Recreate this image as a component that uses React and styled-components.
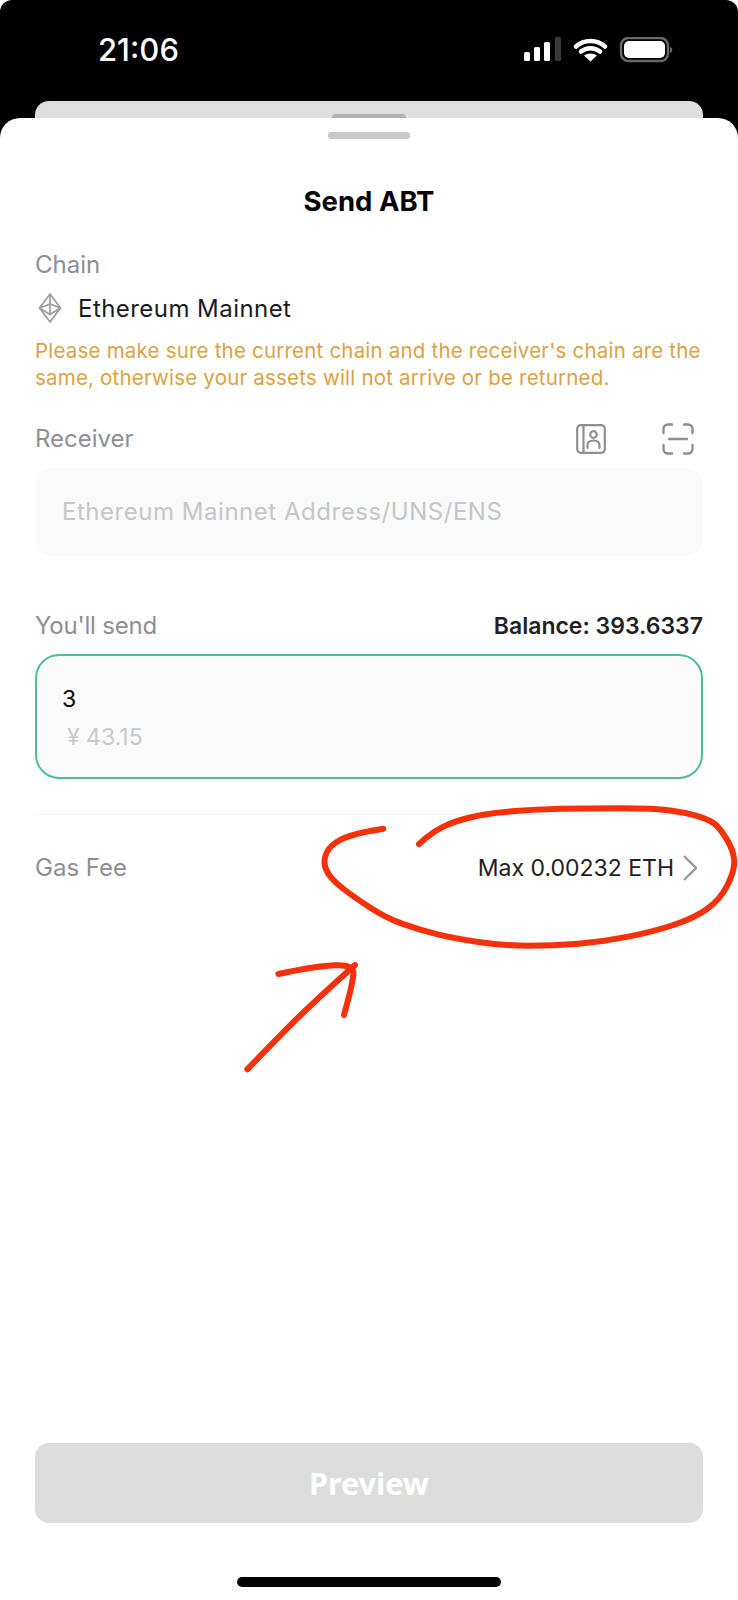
import React from "react";
import styled, { createGlobalStyle } from "styled-components";

const GlobalStyle = createGlobalStyle`
  html, body {
    margin: 0;
    padding: 0;
    background: #fff;
  }
  * {
    box-sizing: border-box;
  }
`;

const Page = styled.div`
  position: relative;
  width: 738px;
  height: 1600px;
  display: flex;
  flex-direction: column;
  background: #000;
  border-radius: 12px 12px 0 0;
  overflow: hidden;
  font-family: Inter, "Liberation Sans", sans-serif;
  color: #1f2023;
`;

const StatusBar = styled.div`
  height: 101px;
  flex: none;
  display: flex;
  align-items: flex-start;
  justify-content: space-between;
  padding: 32px 64px 0 98px;
`;

const Time = styled.div`
  color: #fff;
  font-size: 31px;
  line-height: 36px;
  font-weight: 500;
`;

const StatusIcons = styled.svg`
  display: block;
  margin-top: 5px;
`;

const BackSheet = styled.div`
  flex: none;
  height: 17px;
  margin: 0 35px;
  background: #dedede;
  border-radius: 14px 14px 0 0;
  display: flex;
  justify-content: center;
  padding-top: 13px;
  overflow: hidden;
`;

const BackGrabber = styled.div`
  width: 74px;
  height: 8px;
  border-radius: 3px;
  background: #b4b4b4;
`;

const Sheet = styled.div`
  flex: 1;
  background: #fff;
  border-radius: 20px 20px 0 0;
  display: flex;
  flex-direction: column;
  padding: 14px 35px 13px;
`;

const Grabber = styled.div`
  align-self: center;
  width: 82px;
  height: 7px;
  border-radius: 3px;
  background: #c9c9c9;
`;

const Title = styled.h1`
  margin: 42px 0 0;
  height: 40px;
  text-align: center;
  font-size: 27.5px;
  line-height: 40px;
  font-weight: 700;
  color: #050505;
`;

const Label = styled.div`
  font-size: 24px;
  line-height: 30px;
  color: #8d8f94;
`;

const ChainLabel = styled(Label)`
  margin-top: 29px;
`;

const SendLabel = styled(Label)`
  letter-spacing: -0.2px;
`;

const ChainRow = styled.div`
  display: flex;
  align-items: center;
  gap: 16px;
  margin-top: 13px;
  padding-left: 3px;
  height: 30px;
  font-size: 24px;
  letter-spacing: 0.45px;
  color: #1a1b1e;
`;

const Warning = styled.p`
  margin: 14px 0 0;
  font-size: 20.5px;
  line-height: 27px;
  letter-spacing: 0.2px;
  white-space: nowrap;
  color: #dca243;
`;

const LabelRow = styled.div`
  display: flex;
  align-items: center;
  justify-content: space-between;
  margin-top: ${(p) => p.$top}px;
  height: 32px;
`;

const IconGroup = styled.div`
  display: flex;
  align-items: center;
  gap: 56px;
  padding-right: 9px;
`;

const ReceiverInput = styled.div`
  margin-top: 13px;
  height: 88px;
  border-radius: 18px;
  background: #fafafa;
  display: flex;
  align-items: center;
  padding: 0 0 2px 27px;
  font-size: 24px;
  letter-spacing: 0.53px;
  color: #c5c6c8;
`;

const Balance = styled.div`
  font-size: 23px;
  font-weight: 600;
  color: #1f2023;
`;

const AmountBox = styled.div`
  margin-top: 12px;
  height: 125px;
  border: 2px solid #4fbc9d;
  border-radius: 24px;
  background: #fbfbfc;
  padding: 29px 0 0 25px;
`;

const AmountValue = styled.div`
  font-size: 23px;
  line-height: 28px;
  color: #000;
`;

const AmountFiat = styled.div`
  margin-top: 10px;
  padding-left: 5px;
  font-size: 23px;
  line-height: 28px;
  color: #c8c9cb;
`;

const Divider = styled.div`
  margin-top: 35px;
  height: 1px;
  background: #f2f2f3;
`;

const FeeRow = styled.div`
  display: flex;
  align-items: center;
  justify-content: space-between;
  margin-top: 37px;
  height: 32px;
  padding-right: 6px;
`;

const FeeValue = styled.div`
  display: flex;
  align-items: center;
  gap: 9px;
  font-size: 23px;
  color: #1f2023;
`;

const Preview = styled.div`
  margin-top: auto;
  height: 80px;
  border-radius: 14px;
  background: #dddddd;
  display: flex;
  align-items: center;
  justify-content: center;
  font-family: "Noto Sans", sans-serif;
  font-size: 30.5px;
  font-weight: 700;
  color: #fff;
`;

const HomeBar = styled.div`
  align-self: center;
  margin-top: 54px;
  width: 264px;
  height: 10px;
  border-radius: 5px;
  background: #000;
`;

const Scribble = styled.svg`
  position: absolute;
  left: 220px;
  top: 780px;
  pointer-events: none;
`;

// midpoint smoothing, so the pen strokes can be listed as plain points
const smooth = (pts) => {
  let d = `M${pts[0][0]} ${pts[0][1]}`;
  for (let i = 1; i < pts.length - 1; i++) {
    const mx = (pts[i][0] + pts[i + 1][0]) / 2;
    const my = (pts[i][1] + pts[i + 1][1]) / 2;
    d += `Q${pts[i][0]} ${pts[i][1]} ${mx} ${my}`;
  }
  const last = pts[pts.length - 1];
  return `${d}L${last[0]} ${last[1]}`;
};

const ring = [
  [490, 146], [400, 160], [330, 195], [308, 245], [330, 295], [400, 350], [500, 415],
  [600, 450], [700, 475], [850, 497], [1000, 497], [1150, 485], [1300, 455], [1420, 415],
  [1500, 360], [1545, 270], [1540, 210], [1500, 145], [1470, 120], [1400, 98], [1300, 85],
  [1100, 85], [950, 88], [800, 100], [700, 125], [640, 155], [597, 192],
];
const shaft = [[82, 868], [200, 745], [300, 650], [405, 555]];
const head = [[175, 582], [280, 560], [405, 552], [395, 620], [372, 705]];

const SignalWifiBattery = () => (
  <StatusIcons width="150" height="26" viewBox="0 0 150 26">
    <rect x="0" y="15" width="6" height="9" rx="1.5" fill="#fff" />
    <rect x="10" y="10" width="6" height="14" rx="1.5" fill="#fff" />
    <rect x="20" y="5" width="6" height="19" rx="1.5" fill="#fff" />
    <rect x="31" y="0" width="6" height="24" rx="1.5" fill="#3a3a3a" />
    <path d="M52 9.5C60 2 73 2 81 9.5" fill="none" stroke="#fff" strokeWidth="4.5" strokeLinecap="round" />
    <path d="M57 14.5C62.5 10 70.5 10 76 14.5" fill="none" stroke="#fff" strokeWidth="4.5" strokeLinecap="round" />
    <path d="M66.5 24.5L60 18.5C63.5 15.8 69.5 15.8 73 18.5Z" fill="#fff" />
    <rect x="97" y="1" width="47" height="23" rx="7.5" fill="none" stroke="#6a6a6a" strokeWidth="2.4" />
    <rect x="100" y="4" width="41" height="17" rx="5" fill="#fff" />
    <path d="M146 10C149 10.5 149 15.5 146 16Z" fill="#6a6a6a" />
  </StatusIcons>
);

const EthIcon = () => (
  <svg width="24" height="30" viewBox="0 0 24 30" fill="none" stroke="#9b9c9f" strokeWidth="1.7" strokeLinejoin="round">
    <path d="M12 1L1.5 15L12 29L22.5 15Z" />
    <path d="M12 1V21.5M1.5 15L12 21.5L22.5 15" />
    <path d="M1.5 15L12 11L22.5 15" />
  </svg>
);

const ContactIcon = () => (
  <svg width="30" height="30" viewBox="0 0 30 30" fill="none" stroke="#8e8f93" strokeWidth="2.2" strokeLinecap="round" strokeLinejoin="round">
    <rect x="1.2" y="1.2" width="27.6" height="27.6" rx="3.5" />
    <path d="M7.5 1.2V28.8" />
    <circle cx="17.5" cy="10.5" r="3.3" />
    <path d="M11.5 24V21.5C11.5 18 14 16.5 17.5 16.5C21 16.5 23.5 18 23.5 21.5V24" />
  </svg>
);

const ScanIcon = () => (
  <svg width="32" height="32" viewBox="0 0 32 32" fill="none" stroke="#8e8f93" strokeWidth="2.4" strokeLinecap="round">
    <path d="M1.5 10V6C1.5 3.2 3.5 1.5 6 1.5H10" />
    <path d="M22 1.5H26C28.5 1.5 30.5 3.2 30.5 6V10" />
    <path d="M1.5 22V26C1.5 28.8 3.5 30.5 6 30.5H10" />
    <path d="M22 30.5H26C28.5 30.5 30.5 28.8 30.5 26V22" />
    <path d="M7 16H25" />
  </svg>
);

const Chevron = () => (
  <svg width="14" height="26" viewBox="0 0 14 26" fill="none" stroke="#97989b" strokeWidth="2.3">
    <path d="M1 1L13 13L1 25" />
  </svg>
);

const App = () => (
  <Page>
    <GlobalStyle />
    <StatusBar>
      <Time>21:06</Time>
      <SignalWifiBattery />
    </StatusBar>
    <BackSheet>
      <BackGrabber />
    </BackSheet>
    <Sheet>
      <Grabber />
      <Title>Send ABT</Title>
      <ChainLabel>Chain</ChainLabel>
      <ChainRow>
        <EthIcon />
        Ethereum Mainnet
      </ChainRow>
      <Warning>
        Please make sure the current chain and the receiver's chain are the
        <br />
        same, otherwise your assets will not arrive or be returned.
      </Warning>
      <LabelRow $top={32}>
        <Label>Receiver</Label>
        <IconGroup>
          <ContactIcon />
          <ScanIcon />
        </IconGroup>
      </LabelRow>
      <ReceiverInput>Ethereum Mainnet Address/UNS/ENS</ReceiverInput>
      <LabelRow $top={54}>
        <SendLabel>You'll send</SendLabel>
        <Balance>Balance: 393.6337</Balance>
      </LabelRow>
      <AmountBox>
        <AmountValue>3</AmountValue>
        <AmountFiat>¥ 43.15</AmountFiat>
      </AmountBox>
      <Divider />
      <FeeRow>
        <Label>Gas Fee</Label>
        <FeeValue>
          Max 0.00232 ETH
          <Chevron />
        </FeeValue>
      </FeeRow>
      <Preview>Preview</Preview>
      <HomeBar />
    </Sheet>
    <Scribble width="518" height="300" viewBox="0 0 1554 900" fill="none" stroke="#f5300a" strokeWidth="18" strokeLinecap="round" strokeLinejoin="round">
      <path d={smooth(ring)} />
      <path d={smooth(shaft)} />
      <path d={smooth(head)} />
    </Scribble>
  </Page>
);

export default App;
